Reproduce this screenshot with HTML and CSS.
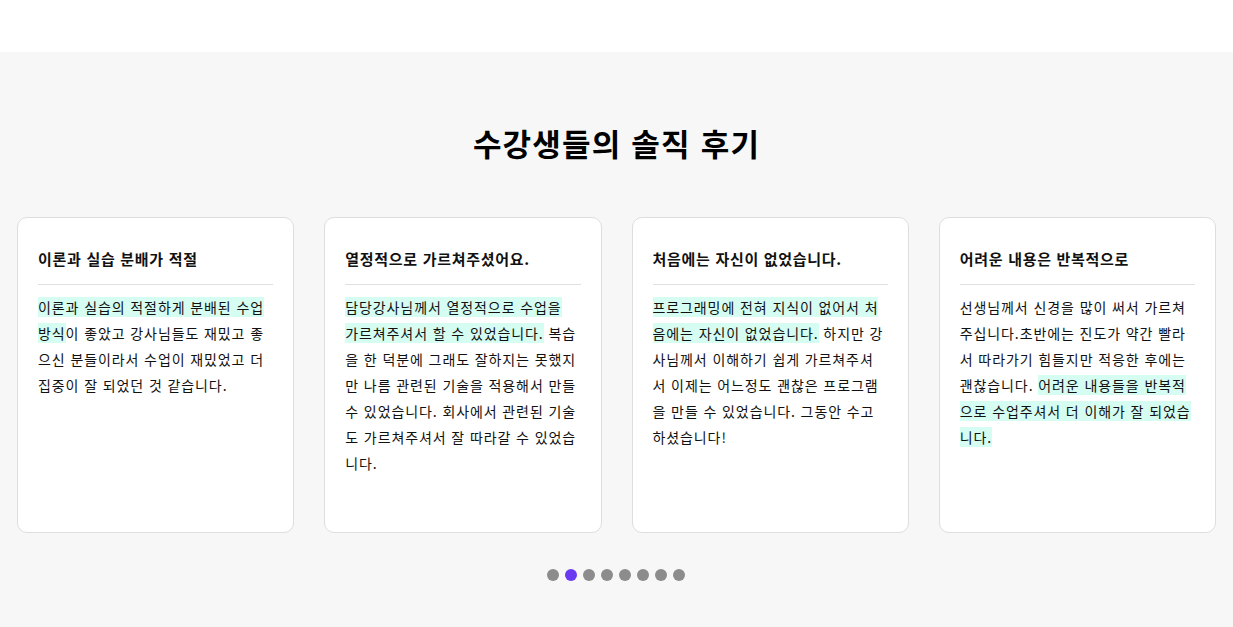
FILE: index.html
```html
<!DOCTYPE html>
<html lang="ko">
<head>
<meta charset="utf-8">
<title>수강생들의 솔직 후기</title>
<link rel="stylesheet" href="styles.css">
</head>
<body>
<header class="topbar"></header>
<section class="reviews">
  <h2 class="reviews-title">수강생들의 솔직 후기</h2>
  <div class="cards">
    <article class="card">
      <h3 class="card-title">이론과 실습 분배가 적절</h3>
      <p class="card-body"><span class="hl">이론과 실습의 적절하게 분배된 수업 방식</span>이 좋았고 강사님들도 재밌고 좋으신 분들이라서 수업이 재밌었고 더 집중이 잘 되었던 것 같습니다.</p>
    </article>
    <article class="card">
      <h3 class="card-title">열정적으로 가르쳐주셨어요.</h3>
      <p class="card-body"><span class="hl">담당강사님께서 열정적으로 수업을 가르쳐주셔서 할 수 있었습니다.</span> 복습을 한 덕분에 그래도 잘하지는 못했지만 나름 관련된 기술을 적용해서 만들 수 있었습니다. 회사에서 관련된 기술도 가르쳐주셔서 잘 따라갈 수 있었습니다.</p>
    </article>
    <article class="card">
      <h3 class="card-title">처음에는 자신이 없었습니다.</h3>
      <p class="card-body"><span class="hl">프로그래밍에 전혀 지식이 없어서 처음에는 자신이 없었습니다.</span> 하지만 강사님께서 이해하기 쉽게 가르쳐주셔서 이제는 어느정도 괜찮은 프로그램을 만들 수 있었습니다. 그동안 수고하셨습니다!</p>
    </article>
    <article class="card">
      <h3 class="card-title">어려운 내용은 반복적으로</h3>
      <p class="card-body">선생님께서 신경을 많이 써서 가르쳐주십니다.초반에는 진도가 약간 빨라서 따라가기 힘들지만 적응한 후에는 괜찮습니다. <span class="hl">어려운 내용들을 반복적으로 수업주셔서 더 이해가 잘 되었습니다.</span></p>
    </article>
  </div>
  <div class="dots">
    <span class="dot"></span>
    <span class="dot active"></span>
    <span class="dot"></span>
    <span class="dot"></span>
    <span class="dot"></span>
    <span class="dot"></span>
    <span class="dot"></span>
    <span class="dot"></span>
  </div>
</section>
</body>
</html>
```
FILE: styles.css
```css
* { box-sizing: border-box; }
html, body { margin: 0; padding: 0; }
body {
  font-family: "Noto Sans CJK KR", "Noto Sans", sans-serif;
  color: #111;
  background: #fff;
  width: 1233px;
  height: 627px;
  overflow: hidden;
}
.topbar {
  height: 52px;
  background: #fff;
}
.reviews {
  background: #f7f7f7;
  padding: 71px 17px 60px;
  min-height: 575px;
}
.reviews-title {
  margin: 0 0 54px;
  text-align: center;
  font-size: 31px;
  line-height: 40px;
  font-weight: 700;
  letter-spacing: 1.2px;
  color: #000;
}
.cards {
  display: flex;
  gap: 30px;
}
.card {
  flex: 1;
  height: 316px;
  background: #fff;
  border: 1px solid #dedede;
  border-radius: 10px;
  padding: 30px 20px 20px;
}
.card-title {
  margin: 0;
  font-size: 15px;
  line-height: 22px;
  font-weight: 700;
  letter-spacing: 0.7px;
  color: #111;
  padding-bottom: 14px;
  border-bottom: 1px solid #e0e0e0;
}
.card-body {
  margin: 9px 0 0;
  padding-right: 1px;
  font-size: 14px;
  line-height: 26px;
  letter-spacing: 0.9px;
  color: #111;
}
.hl {
  background: #d6fdf1;
}
.dots {
  display: flex;
  justify-content: center;
  gap: 6px;
  margin-top: 36px;
  padding-right: 2px;
}
.dot {
  width: 12px;
  height: 12px;
  border-radius: 50%;
  background: #8c8c8c;
}
.dot.active {
  background: #6a3af0;
}
```
